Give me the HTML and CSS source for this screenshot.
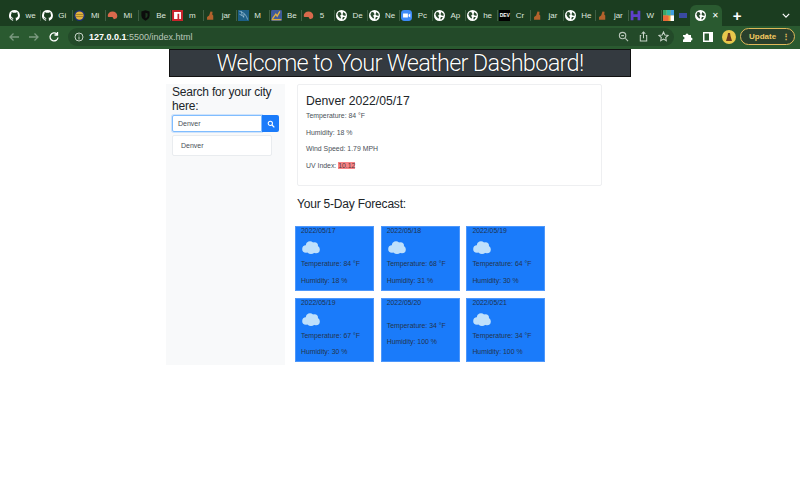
FILE: index.html
```html
<!DOCTYPE html>
<html lang="en">
<head>
  <meta charset="UTF-8" />
  <title>Weather Dashboard</title>
  <link rel="stylesheet" href="styles.css">
</head>
<body>
  <svg class="defs" width="0" height="0">
    <symbol id="globe" viewBox="0 0 16 16">
      <circle cx="8" cy="8" r="8" fill="#fff"/>
      <path d="M4 2.500l3 1 1 3-2 1.500 1.500 3.500-1.500 1-3-3.500-1-3zM10.500 3l3 2 1 3-3 .5-2-2zM10 10l3 0-2 3.500-2 0z" fill="#2a4a2e"/>
    </symbol>
    <symbol id="gh" viewBox="0 0 16 16">
      <path fill="#fff" d="M8 0a8 8 0 0 0-2.500 15.600c.4.100.5-.2.5-.4v-1.400c-2.200.5-2.700-1-2.700-1-.4-.9-.9-1.200-.9-1.200-.7-.5.100-.5.100-.5.800.1 1.200.8 1.200.8.700 1.200 1.900.9 2.300.7.100-.5.300-.9.500-1.100-1.800-.2-3.600-.9-3.600-4 0-.9.300-1.600.8-2.100-.1-.2-.4-1 .1-2.100 0 0 .7-.2 2.200.8a7.500 7.500 0 0 1 4 0c1.500-1 2.200-.8 2.200-.8.400 1.100.2 1.900.1 2.100.5.600.8 1.300.8 2.100 0 3.100-1.900 3.700-3.700 3.900.3.300.6.800.6 1.500v2.200c0 .2.100.5.600.4A8 8 0 0 0 8 0z"/>
    </symbol>
    <symbol id="helmet" viewBox="0 0 16 16">
      <path fill="#d9694c" d="M1 9a7 7 0 0 1 14 0l-1 3-4 1.500-2-3.500H2z"/>
    </symbol>
    <symbol id="rider" viewBox="0 0 16 16">
      <path fill="#b3622c" d="M8 2l3 .5-.5 4 1.500 1.500v6H3v-4l3-2 1-3z"/>
    </symbol>
    <symbol id="coin" viewBox="0 0 16 16">
      <circle cx="8" cy="8" r="8" fill="#1c2f73"/>
      <circle cx="8" cy="8" r="6" fill="#e3b341"/>
      <path d="M3 6.500h10M3 9.500h10" stroke="#8a6d1f"/>
    </symbol>
    <symbol id="shield" viewBox="0 0 16 16">
      <path fill="#0c0c0c" d="M2 2l6-1.500L14 2v6c0 4-3 6-6 7.500C5 14 2 12 2 8z"/>
      <path fill="#1d3a20" d="M8 4l3 1v3c0 2-1.500 3-3 4z"/>
    </symbol>
    <symbol id="npm" viewBox="0 0 16 16">
      <rect width="16" height="16" fill="#c8242c"/>
      <path fill="#fff" d="M3 3h10v10h-2.500V5.500H8V13H3z"/>
    </symbol>
    <symbol id="feather" viewBox="0 0 16 16">
      <rect width="16" height="16" fill="#1d5f86"/>
      <path d="M2 2c6 1 10 5 12 12M5 2l1 6M9 5l-1 6M2 6l7 4" fill="none" stroke="#a5c8dc"/>
    </symbol>
    <symbol id="chart" viewBox="0 0 16 16">
      <rect width="16" height="16" rx="2" fill="#3d5a9a"/>
      <path d="M2 13L7 6l2 3 4-7" fill="none" stroke="#e0b040" stroke-width="2"/>
      <path d="M1 14h14" stroke="#d9a93a" stroke-width="2"/>
    </symbol>
    <symbol id="zoom" viewBox="0 0 16 16">
      <rect width="16" height="16" rx="5" fill="#3d8bf8"/>
      <path fill="#fff" d="M3 5h7v6H3zM11 7l2.500-2v6L11 9z"/>
    </symbol>
    <symbol id="hh" viewBox="0 0 16 16">
      <path fill="#5d40c9" d="M1 1h4v5h6V1h4v14h-4v-5H5v5H1z"/>
    </symbol>
    <symbol id="tiles" viewBox="0 0 16 16">
      <rect width="16" height="16" fill="#e9a23b"/>
      <rect width="5" height="8" fill="#37a86a"/>
      <rect x="5" width="6" height="8" fill="#2fb8a6"/>
      <rect x="11" width="5" height="8" fill="#3f9ee0"/>
      <rect y="8" width="8" height="8" fill="#ea6a3a"/>
      <rect x="11" y="8" width="5" height="8" fill="#fff"/>
    </symbol>
    <symbol id="cloud" viewBox="0 0 18 13">
      <g fill="#bfe0fb">
        <circle cx="4" cy="8" r="3.800"/>
        <circle cx="8" cy="4.500" r="4.200"/>
        <circle cx="12.500" cy="4.800" r="3.500"/>
        <circle cx="14" cy="8.500" r="3.800"/>
        <circle cx="9" cy="9" r="4"/>
      </g>
    </symbol>
  </svg>

  <header class="chrome">
    <div class="tabstrip">
      <div class="tab"><svg class="fav"><use href="#gh"/></svg><span>we</span></div>
      <div class="tab"><svg class="fav"><use href="#gh"/></svg><span>Gi</span></div>
      <div class="tab"><svg class="fav"><use href="#coin"/></svg><span>Mi</span></div>
      <div class="tab"><svg class="fav"><use href="#helmet"/></svg><span>Mi</span></div>
      <div class="tab"><svg class="fav"><use href="#shield"/></svg><span>Be</span></div>
      <div class="tab"><svg class="fav"><use href="#npm"/></svg><span>m</span></div>
      <div class="tab"><svg class="fav"><use href="#rider"/></svg><span>jar</span></div>
      <div class="tab"><svg class="fav"><use href="#feather"/></svg><span>M</span></div>
      <div class="tab"><svg class="fav"><use href="#chart"/></svg><span>Be</span></div>
      <div class="tab"><svg class="fav"><use href="#helmet"/></svg><span>5</span></div>
      <div class="tab"><svg class="fav"><use href="#globe"/></svg><span>De</span></div>
      <div class="tab"><svg class="fav"><use href="#globe"/></svg><span>Ne</span></div>
      <div class="tab"><svg class="fav"><use href="#zoom"/></svg><span>Pc</span></div>
      <div class="tab"><svg class="fav"><use href="#globe"/></svg><span>Ap</span></div>
      <div class="tab"><svg class="fav"><use href="#globe"/></svg><span>he</span></div>
      <div class="tab"><span class="fav dev">DEV</span><span>Cr</span></div>
      <div class="tab"><svg class="fav"><use href="#rider"/></svg><span>jar</span></div>
      <div class="tab"><svg class="fav"><use href="#globe"/></svg><span>He</span></div>
      <div class="tab"><svg class="fav"><use href="#rider"/></svg><span>jar</span></div>
      <div class="tab"><svg class="fav"><use href="#hh"/></svg><span>W</span></div>
      <div class="tab tab-small"><svg class="fav"><use href="#tiles"/></svg><span class="flag"></span></div>
      <div class="tab active"><svg class="fav"><use href="#globe"/></svg><span class="close">✕</span></div>
      <span class="newtab">+</span>
      <svg class="chevron" viewBox="0 0 10 6"><path d="M1 1l4 4 4-4" fill="none" stroke="#fff" stroke-width="1.500"/></svg>
    </div>
    <div class="toolbar">
      <svg class="tool" viewBox="0 0 12 12"><path d="M11 6H2M5.500 2.500L2 6l3.500 3.500" fill="none" stroke="#7c9a80" stroke-width="1.300"/></svg>
      <svg class="tool fwd" viewBox="0 0 12 12"><path d="M1 6h9M6.500 2.500L10 6l-3.500 3.500" fill="none" stroke="#7c9a80" stroke-width="1.300"/></svg>
      <svg class="tool" viewBox="0 0 12 12"><path d="M10 6.500A4 4 0 1 1 8.800 3M9.500 1v3h-3" fill="none" stroke="#fff" stroke-width="1.300"/></svg>
      <div class="omnibox">
        <svg class="info" viewBox="0 0 10 10"><circle cx="5" cy="5" r="4" fill="none" stroke="#c8d4c9"/><path d="M5 4.500V7.500M5 2.500v1" stroke="#c8d4c9"/></svg>
        <span class="url"><b>127.0.0.1</b>:5500/index.html</span>
        <svg class="omni-icon" viewBox="0 0 12 12"><circle cx="5" cy="5" r="3.500" fill="none" stroke="#b9c7ba" stroke-width="1.200"/><path d="M8 8l3 3M3.500 5h3" stroke="#b9c7ba" stroke-width="1.200"/></svg>
        <svg class="omni-icon" viewBox="0 0 12 12"><path d="M3.500 5H2.500v6h7V5h-1M6 8V1M4 3l2-2 2 2" fill="none" stroke="#c8d4c9" stroke-width="1.100"/></svg>
        <svg class="omni-icon" viewBox="0 0 12 12"><path d="M6 1l1.500 3.300 3.500.4-2.600 2.400.7 3.600L6 8.900l-3.100 1.800.7-3.600L1 4.700l3.500-.4z" fill="none" stroke="#c8d4c9" stroke-width="1.100"/></svg>
      </div>
      <svg class="tool" viewBox="0 0 12 12"><path fill="#fff" d="M1 4h2.500a1.500 1.500 0 0 1 3 0H9v2.500a1.500 1.500 0 0 1 0 3V11H1V8.500a1.500 1.500 0 0 0 0-3z"/></svg>
      <svg class="tool" viewBox="0 0 12 12"><path fill="#fff" d="M1 1h10v10H1zM2.500 2.500v7H7v-7z" fill-rule="evenodd"/></svg>
      <svg class="avatar" viewBox="0 0 14 14"><circle cx="7" cy="7" r="7" fill="#e8c84c"/><path fill="#6b3a1e" d="M6 3h2l.5 3L10 11H4l1.500-5z"/></svg>
      <span class="update">Update<i class="dots">⋮</i></span>
    </div>
  </header>

  <div class="page">
    <h1 class="banner">Welcome to Your Weather Dashboard!</h1>
    <div class="columns">
      <aside class="sidebar">
        <h2 class="search-title">Search for your city here:</h2>
        <div class="search">
          <span class="search-input">Denver</span>
          <button class="search-btn">
            <svg viewBox="0 0 12 12"><circle cx="5" cy="5" r="3.200" fill="none" stroke="#fff" stroke-width="1.600"/><path d="M7.500 7.500L11 11" stroke="#fff" stroke-width="1.800"/></svg>
          </button>
        </div>
        <div class="history">Denver</div>
      </aside>
      <main class="main">
        <section class="current">
          <h3>Denver 2022/05/17</h3>
          <p>Temperature: 84 °F</p>
          <p>Humidity: 18 %</p>
          <p>Wind Speed: 1.79 MPH</p>
          <p>UV Index: <span class="uv">10.12</span></p>
        </section>
        <h4 class="forecast-title">Your 5-Day Forecast:</h4>
        <div class="forecast">
          <div class="day"><div class="date">2022/05/17</div><svg class="cloud"><use href="#cloud"/></svg><p>Temperature: 84 °F</p><p>Humidity: 18 %</p></div>
          <div class="day"><div class="date">2022/05/18</div><svg class="cloud"><use href="#cloud"/></svg><p>Temperature: 68 °F</p><p>Humidity: 31 %</p></div>
          <div class="day"><div class="date">2022/05/19</div><svg class="cloud"><use href="#cloud"/></svg><p>Temperature: 64 °F</p><p>Humidity: 30 %</p></div>
          <div class="day"><div class="date">2022/05/19</div><svg class="cloud"><use href="#cloud"/></svg><p>Temperature: 67 °F</p><p>Humidity: 30 %</p></div>
          <div class="day"><div class="date">2022/05/20</div><div class="no-icon"></div><p>Temperature: 34 °F</p><p>Humidity: 100 %</p></div>
          <div class="day"><div class="date">2022/05/21</div><svg class="cloud"><use href="#cloud"/></svg><p>Temperature: 34 °F</p><p>Humidity: 100 %</p></div>
        </div>
      </main>
    </div>
  </div>
</body>
</html>
```

FILE: styles.css
```css
* { box-sizing: border-box; }

body {
  margin: 0;
  font-family: "Liberation Sans", Arial, sans-serif;
  background: #fff;
  color: #212529;
}

.defs { position: absolute; }

/* browser bar */
.chrome { height: 49px; background: #2a5a30; }

.tabstrip {
  height: 26px;
  background: #1b3d20;
  display: flex;
  align-items: flex-end;
  padding-left: 8px;
  position: relative;
}

.tab {
  width: 32.7px;
  height: 21px;
  display: flex;
  align-items: center;
  gap: 5.5px;
  padding-left: 1px;
  color: #dfe6df;
  font-size: 8px;
  overflow: hidden;
  white-space: nowrap;
  flex: none;
  background: linear-gradient(#3f5f43, #3f5f43) right center / 1px 11px no-repeat;
}

.tab-small { gap: 5px; width: 27px; background: none; }

.tab.active {
  width: 32px;
  height: 21px;
  background: #2a5a30;
  border-radius: 6px 6px 0 0;
  padding-left: 5px;
  margin-left: 1px;
  gap: 6px;
}

.close { font-size: 8px; color: #fff; }

.fav { width: 11px; height: 11px; flex: none; display: block; }
.dev { background: #000; color: #fff; font-size: 5px; line-height: 11px; text-align: center; font-weight: bold; }
.flag { width: 8px; height: 5px; background: #3a4aa0; flex: none; }

.newtab { color: #fff; font-size: 15px; font-weight: bold; line-height: 21px; margin-left: 11px; }
.chevron { position: absolute; right: 10px; top: 13px; width: 8px; height: 5px; }

.toolbar {
  height: 21px;
  display: flex;
  align-items: center;
  padding: 0 5px 0 8px;
  gap: 8px;
}

.tool { width: 12px; height: 12px; flex: none; }

.omnibox {
  flex: 1;
  height: 18px;
  border-radius: 9px;
  background: #234a29;
  display: flex;
  align-items: center;
  padding: 0 5px 0 6px;
  gap: 9px;
}

.info { width: 10px; height: 10px; flex: none; margin-right: -4px; }
.url { flex: 1; color: #b9c7ba; font-size: 9px; }
.url b { color: #fff; }
.omni-icon { width: 11px; height: 11px; flex: none; }

.avatar { width: 14px; height: 14px; flex: none; }

.update {
  width: 55px;
  height: 17px;
  border: 1px solid #e0b95a;
  border-radius: 9px;
  background: #28402c;
  color: #f0c860;
  font-size: 8px;
  font-weight: bold;
  display: flex;
  align-items: center;
  justify-content: space-between;
  padding: 0 4px 0 8px;
  flex: none;
  margin-left: -4px;
}

.dots { font-style: normal; }

/* page */
.page { width: 468px; margin: 0 auto; }

.banner {
  margin: 0 3px;
  height: 28px;
  background: #343a40;
  border: 1px solid #111;
  color: #fff;
  font-family: Roboto, "Liberation Sans", sans-serif;
  font-size: 23.5px;
  font-weight: 300;
  letter-spacing: -0.7px;
  line-height: 26px;
  text-align: center;
  text-shadow: 0 0 1px #000;
}

.columns { display: flex; margin-top: 7px; }

.sidebar {
  width: 119px;
  height: 281px;
  background: #f8f9fa;
  padding: 1px 6px;
  flex: none;
}

.search-title { margin: 0; font-size: 12px; letter-spacing: -0.2px; line-height: 14px; font-weight: 400; }

.search { display: flex; height: 17px; margin-top: 2px; }

.search-input {
  flex: 1;
  background: #fff;
  border: 1px solid #80bdff;
  border-radius: 2px 0 0 2px;
  box-shadow: 0 0 0 1px #cfe3fb;
  padding-left: 5px;
  font-size: 7px;
  line-height: 15px;
  color: #495057;
}

.search-btn {
  width: 17px;
  border: none;
  border-radius: 0 2px 2px 0;
  background: #1a7bfa;
  padding: 0;
  display: flex;
  align-items: center;
  justify-content: center;
}

.search-btn svg { width: 8px; height: 8px; }

.history {
  width: 100px;
  height: 21px;
  margin-top: 3px;
  background: #fff;
  border: 1px solid #e9ecef;
  border-radius: 2px;
  padding-left: 8px;
  font-size: 7px;
  line-height: 19px;
  color: #495057;
}

.main { flex: 1; padding-left: 10px; }

.current {
  width: 305px;
  height: 102px;
  margin-left: 2px;
  border: 1px solid #eeeff1;
  border-radius: 2px;
  padding: 9px 8px;
}

.current h3 { margin: 0 0 3px; font-size: 12.2px; line-height: 15px; font-weight: 400; }
.current p { margin: 0 0 8.5px; font-size: 6.9px; line-height: 8px; color: #495057; }

.uv { background: #f88488; color: #5a3a3a; }

.forecast-title { margin: 11px 0 15px 2px; font-size: 12px; letter-spacing: -0.2px; line-height: 14px; font-weight: 400; }

.forecast {
  display: grid;
  grid-template-columns: repeat(3, 79px);
  grid-auto-rows: 64.5px;
  row-gap: 7px;
  column-gap: 6.7px;
}

.day {
  background: #1a7bfa;
  border: 1px solid #4d97fb;
  padding: 0 5px;
  font-size: 6.9px;
  color: #23344e;
}

.date { line-height: 7px; color: #1f3350; }
.cloud { display: block; width: 18px; height: 13px; margin: 7px 0 6px 1px; }
.no-icon { height: 16px; }
.day p { margin: 0 0 8.5px; line-height: 8px; }
```
